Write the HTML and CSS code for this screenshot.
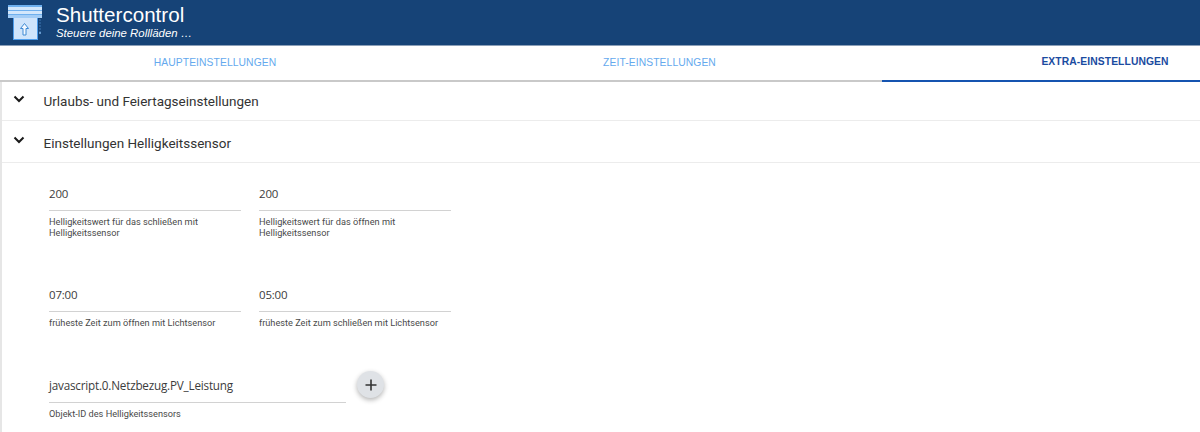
FILE: index.html
```html
<!DOCTYPE html>
<html lang="de">
<head>
<meta charset="utf-8">
<title>Shuttercontrol</title>
<link rel="stylesheet" href="styles.css">
</head>
<body>
<header class="header">
  <svg class="logo" width="44" height="44" viewBox="0 0 44 44">
    <rect x="13.500" y="15.500" width="24" height="23" fill="#cfe4fb" stroke="#4f9eec" stroke-width="1"/>
    <rect x="8" y="4" width="34" height="2" fill="#6fb0ee"/>
    <rect x="8" y="6" width="34" height="3" fill="#d3e7fb"/>
    <rect x="8" y="9" width="34" height="1" fill="#6fb0ee"/>
    <rect x="8" y="10" width="34" height="3" fill="#d3e7fb"/>
    <rect x="8" y="13" width="34" height="1" fill="#6fb0ee"/>
    <rect x="8" y="14" width="34" height="3" fill="#a3cdf6"/>
    <path d="M24.500 22.500l-4 5h2.500v6.500h3v-6.500h2.500z" fill="#f4f9ff" stroke="#3f8ad4" stroke-width="1"/>
    <path d="M40 18v14" stroke="#3f78b4" stroke-width="1" stroke-dasharray="2 1"/>
    <circle cx="40" cy="32" r="1" fill="#7fb3e6"/>
  </svg>
  <div class="brand">
    <div class="brand-title">Shuttercontrol</div>
    <div class="brand-sub">Steuere deine Rollläden …</div>
  </div>
</header>
<nav class="tabs">
  <a class="tab tab-first">HAUPTEINSTELLUNGEN</a>
  <a class="tab">ZEIT-EINSTELLUNGEN</a>
  <a class="tab tab-active">EXTRA-EINSTELLUNGEN</a>
</nav>
<main class="accordion">
  <section class="panel-head">
    <svg class="chev" width="12" height="8" viewBox="0 0 12 8"><path d="M1.500 1.500 6 6l4.500-4.500" fill="none" stroke="#1a1a1a" stroke-width="2"/></svg>
    <span>Urlaubs- und Feiertagseinstellungen</span>
  </section>
  <section class="panel-head">
    <svg class="chev" width="12" height="8" viewBox="0 0 12 8"><path d="M1.500 1.500 6 6l4.500-4.500" fill="none" stroke="#1a1a1a" stroke-width="2"/></svg>
    <span>Einstellungen Helligkeitssensor</span>
  </section>
  <div class="panel-body">
    <div class="row row-1">
      <div class="field"><div class="value">200</div><div class="help">Helligkeitswert für das schließen mit Helligkeitssensor</div></div>
      <div class="field"><div class="value">200</div><div class="help">Helligkeitswert für das öffnen mit Helligkeitssensor</div></div>
    </div>
    <div class="row row-2">
      <div class="field"><div class="value">07:00</div><div class="help">früheste Zeit zum öffnen mit Lichtsensor</div></div>
      <div class="field"><div class="value">05:00</div><div class="help">früheste Zeit zum schließen mit Lichtsensor</div></div>
    </div>
    <div class="row row-3">
      <div class="field field-wide"><div class="value value-id">javascript.0.Netzbezug.PV_Leistung</div><div class="help">Objekt-ID des Helligkeitssensors</div></div>
      <button class="fab" aria-label="Hinzufügen"><svg width="14" height="14" viewBox="0 0 14 14"><path d="M7 1.500v11M1.500 7h11" stroke="#333" stroke-width="1.600"/></svg></button>
    </div>
  </div>
</main>
</body>
</html>
```
FILE: styles.css
```css
* { box-sizing: border-box; }
html, body { margin: 0; height: 432px; overflow: hidden; }
body { background: #fff; font-family: "Liberation Sans", Arial, sans-serif; color: #333; }
.header { height: 46px; background: #164377; border-bottom: 1px solid #8b9fb8; display: flex; align-items: center; color: #fff; }
.logo { flex: none; }
.brand { margin-left: 12px; margin-top: -1px; }
.brand-title { font-size: 20.600px; line-height: 22px; }
.brand-sub { font-size: 11.400px; line-height: 14px; font-style: italic; }
.tabs { display: grid; grid-template-columns: 437px 445px 318px; height: 36px; box-shadow: inset 0 -2px 0 #c9c9c9; }
.tab { display: flex; align-items: center; justify-content: center; height: 36px; font-size: 10.300px; letter-spacing: .1px; color: #64a9ee; padding-bottom: 3px; }
.tab-first { padding-right: 7px; }
.tab-active { color: #1a4ba0; font-weight: bold; border-bottom: 2px solid #1554b0; padding-left: 128px; white-space: nowrap; }
.accordion { border-left: 2px solid #e6e6e6; height: 350px; }
.panel-head { height: 39px; border-bottom: 1px solid #ececec; display: flex; align-items: center; font-family: Roboto, sans-serif; font-size: 13.500px; color: #333; padding-left: 11px; }
.panel-head:nth-child(2) { height: 42px; padding-top: 2px; }
.chev { margin-right: 18.500px; margin-top: -4px; }
.panel-head:nth-child(2) .chev { margin-top: -6px; }
.panel-body { padding-left: 47px; }
.row { display: flex; gap: 18px; }
.row-1 { padding-top: 23px; height: 110px; }
.row-2 { height: 104px; padding-top: 14px; }
.row-3 { gap: 11px; }
.field { width: 192px; }
.field-wide { width: 297px; }
.value { height: 25px; border-bottom: 1px solid #d2d2d2; font-family: "Open Sans", sans-serif; font-size: 11.500px; letter-spacing: -.2px; color: #3c3c3c; line-height: 16px; }
.value-id { font-size: 11.700px; letter-spacing: -.2px; height: 26px; line-height: 17px; }
.help { margin-top: 5px; font-family: Roboto, sans-serif; font-size: 9.200px; line-height: 11px; color: #4a4a4a; }
.fab { width: 27px; height: 27px; margin-top: -6px; padding: 0; border: none; border-radius: 50%; background: #dfe2e6; box-shadow: 0 2px 5px rgba(0,0,0,.3); display: flex; align-items: center; justify-content: center; }
```
